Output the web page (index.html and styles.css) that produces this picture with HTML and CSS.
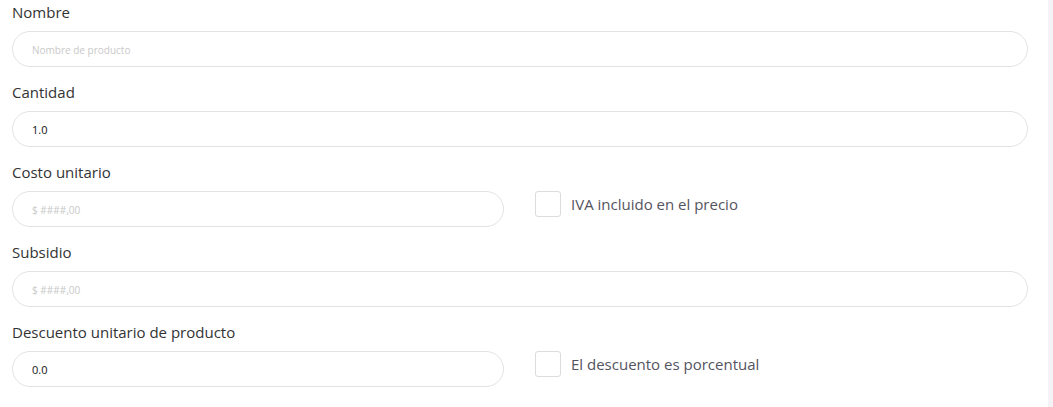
FILE: index.html
```html
<!DOCTYPE html>
<html lang="es">
<head>
    <meta charset="UTF-8">
    <title>Producto</title>
    <link rel="stylesheet" href="styles.css">
</head>
<body>
    <form class="form">
        <div class="field">
            <label class="label">Nombre</label>
            <input class="input" type="text" placeholder="Nombre de producto">
        </div>
        <div class="field">
            <label class="label">Cantidad</label>
            <input class="input" type="text" value="1.0">
        </div>
        <div class="field">
            <label class="label">Costo unitario</label>
            <div class="row">
                <input class="input half" type="text" placeholder="$ ####,00">
                <label class="check"><span class="box"></span>IVA incluido en el precio</label>
            </div>
        </div>
        <div class="field">
            <label class="label">Subsidio</label>
            <input class="input" type="text" placeholder="$ ####,00">
        </div>
        <div class="field">
            <label class="label">Descuento unitario de producto</label>
            <div class="row">
                <input class="input half" type="text" value="0.0">
                <label class="check"><span class="box"></span>El descuento es porcentual</label>
            </div>
        </div>
        <div class="field">
            <label class="label">Valor de venta</label>
        </div>
    </form>
</body>
</html>
```

FILE: styles.css
```css
*{ margin: 0; padding: 0; box-sizing: border-box; }
html,body{
    height:100%;
    overflow: hidden;
}
body{
    background: #f3f3f8;
}
.form{
    width:1048px;
    min-height:100%;
    background: #fff;
    padding: 0 20px 0 12px;
    font-family: "Open Sans", "Liberation Sans", sans-serif;
}
.field{
    padding-bottom: 13px;
}
.label{
    display: block;
    height:24px;
    line-height: 24px;
    margin-bottom: 7px;
    font-size: 15px;
    color: #333;
}
.input{
    display: block;
    width:100%;
    height:36px;
    border: 1px solid #e3e3e3;
    border-radius: 18px;
    padding: 0 19px;
    font-family: "Open Sans", sans-serif;
    font-size: 11px;
    color: #111;
    outline: none;
    background: #fff;
}
.input::placeholder{
    color: #c9c9c9;
    font-size: 10px;
}
.row{
    display: flex;
    align-items: flex-start;
}
.input.half{
    width:492px;
    flex: none;
}
.check{
    display: flex;
    align-items: center;
    margin-left: 31px;
    height:26px;
    font-size: 15px;
    color: #545460;
}
.box{
    width:26px;
    height:26px;
    border: 1px solid #dcdcdc;
    border-radius: 3px;
    margin-right: 10px;
}
```
